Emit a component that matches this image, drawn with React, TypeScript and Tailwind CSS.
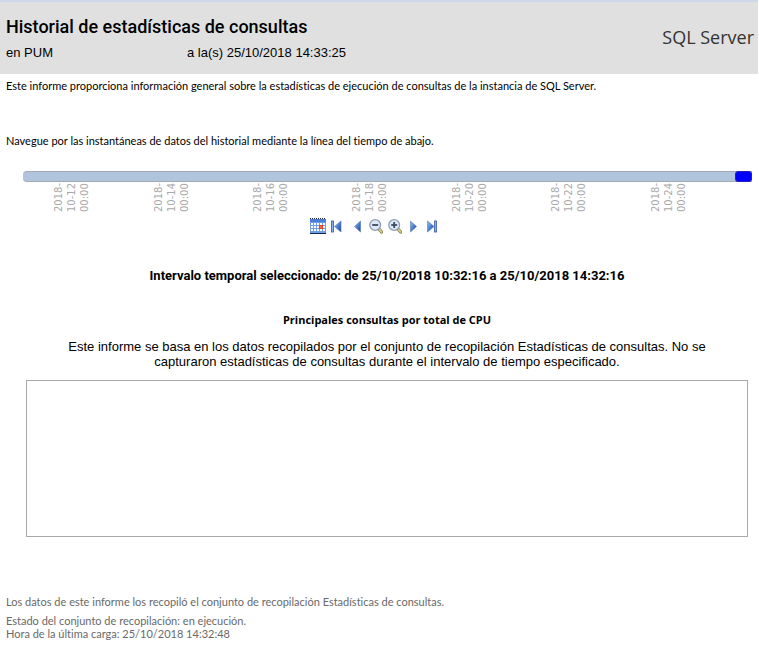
import type { ReactNode } from "react";

const days = ["12", "14", "16", "18", "20", "22", "24"];

function ToolButton({ label, children }: { label: string; children: ReactNode }) {
  return (
    <button type="button" aria-label={label} title={label} className="block h-4 w-4 cursor-pointer">
      <svg viewBox="0 0 16 16" className="block h-4 w-4">
        {children}
      </svg>
    </button>
  );
}

function Magnifier({ plus }: { plus?: boolean }) {
  return (
    <g transform="translate(2 0)">
      <path d="M10 11L12.6 14" stroke="#8a8450" strokeWidth="3.4" strokeLinecap="round" />
      <path d="M10.3 11.3L12.6 14" stroke="#ddd58c" strokeWidth="1.6" strokeLinecap="round" />
      <circle cx="6.2" cy="7" r="5.4" fill="#dce9fa" stroke="#8d9cb0" strokeWidth="1.3" />
      <path d="M3.2 7H9.2" stroke="#3a4a63" strokeWidth="1.8" />
      {plus && <path d="M6.2 4V10" stroke="#3a4a63" strokeWidth="1.8" />}
    </g>
  );
}

function Toolbar() {
  return (
    <div className="mt-[6px] flex justify-center gap-[3px] pr-[10px]">
      <svg width="0" height="0" className="absolute">
        <defs>
          <linearGradient id="blue" x1="0" y1="0" x2="1" y2="1">
            <stop offset="0" stopColor="#a6c6f5" />
            <stop offset="0.5" stopColor="#4a7fd4" />
            <stop offset="1" stopColor="#1b3f94" />
          </linearGradient>
        </defs>
      </svg>
      <ToolButton label="Calendario">
        <rect x="0" y="2" width="16" height="14" fill="#6f9fe8" />
        <path d="M0 0.5H16" stroke="#222" strokeDasharray="1 1" />
        <rect x="0" y="1" width="16" height="3" fill="#4a7ed6" />
        <g fill="#fff">
          {[5, 8, 11].map((y) =>
            [1, 4, 7, 10, 13].map((x) => (
              <rect key={`${x}-${y}`} x={x} y={y} width="2" height="2" />
            )),
          )}
        </g>
        <rect x="0" y="15" width="16" height="1" fill="#14264d" />
        <rect x="9.75" y="7.75" width="2.5" height="2.5" fill="#fff" stroke="#e5401c" strokeWidth="1.5" />
      </ToolButton>
      <ToolButton label="Inicio">
        <rect x="2.5" y="3" width="2" height="11" fill="#8fb0e6" stroke="#35579c" strokeWidth="0.8" />
        <path d="M12 3V14L5.5 8.5Z" fill="url(#blue)" stroke="#5876ad" strokeWidth="0.6" />
      </ToolButton>
      <ToolButton label="Anterior">
        <path d="M12.5 3V14L6.5 8.5Z" fill="url(#blue)" stroke="#5876ad" strokeWidth="0.6" />
      </ToolButton>
      <ToolButton label="Alejar">
        <Magnifier />
      </ToolButton>
      <ToolButton label="Acercar">
        <Magnifier plus />
      </ToolButton>
      <ToolButton label="Siguiente">
        <path d="M5.5 3V14L11.5 8.5Z" fill="url(#blue)" stroke="#5876ad" strokeWidth="0.6" />
      </ToolButton>
      <ToolButton label="Final">
        <path d="M3.5 3V14L10 8.5Z" fill="url(#blue)" stroke="#5876ad" strokeWidth="0.6" />
        <rect x="10.5" y="3" width="2" height="11" fill="#8fb0e6" stroke="#35579c" strokeWidth="0.8" />
      </ToolButton>
    </div>
  );
}

export default function App() {
  return (
    <main className="min-h-screen bg-white font-[Lato,Arial,sans-serif] text-[11px] leading-[13px] text-black [font-variant-ligatures:none]">
      <header className="mr-px flex justify-between border-t-2 border-[#ccd8e8] bg-[#e0e0e0] pt-[13px] pr-1 pb-[11px] pl-[6px]">
        <div>
          <h1 className="font-[Roboto,Arial,sans-serif] text-[18px] leading-6 font-medium">
            Historial de estadísticas de consultas
          </h1>
          <div className="mt-1 flex font-['Liberation_Sans',Arial,sans-serif] text-[13px] leading-5">
            <span className="w-[181px]">en PUM</span>
            <span>a la(s) 25/10/2018 14:33:25</span>
          </div>
        </div>
        <div className="pt-[10px] font-['Open_Sans',sans-serif] text-[18px] leading-6 text-[#333]">SQL Server</div>
      </header>

      <p className="mt-[5px] px-[6px]">
        Este informe proporciona información general sobre la estadísticas de ejecución de consultas de la instancia de SQL Server.
      </p>
      <p className="mt-[42px] px-[6px]">
        Navegue por las instantáneas de datos del historial mediante la línea del tiempo de abajo.
      </p>

      <section aria-label="Línea del tiempo" className="mt-6">
        <div className="mr-[7px] ml-[23px] flex h-[11px] justify-end rounded-l-sm border-y border-[#a5a9b0] bg-[#b0c4de]">
          <button type="button" aria-label="Intervalo seleccionado" className="-my-px block w-[17px] rounded-[3px] border border-[#2020c0] bg-[#0000ff]" />
        </div>
        <div className="mr-[41px] ml-[22px] grid grid-cols-7 pt-[2px] font-['DejaVu_Sans',sans-serif] text-[10px] text-[#a9a9a9]">
          {days.map((day) => (
            <time key={day} dateTime={`2018-10-${day}`} className="h-[28px] w-[39px] rotate-180 justify-self-center leading-[13px] whitespace-nowrap [writing-mode:vertical-rl]">
              2018-
              <br />
              10-{day}
              <br />
              00:00
            </time>
          ))}
        </div>
        <Toolbar />
      </section>

      <section className="mt-[35px] mr-[11px] ml-[26px] text-center">
        <p className="font-[Roboto,Arial,sans-serif] text-[13px] leading-[14px] font-bold">
          Intervalo temporal seleccionado: de 25/10/2018 10:32:16 a 25/10/2018 14:32:16
        </p>
        <h2 className="mt-[29px] font-['Open_Sans',sans-serif] text-[11px] leading-[15px] font-bold">
          Principales consultas por total de CPU
        </h2>
        <p className="mx-8 mt-3 font-['Liberation_Sans',Arial,sans-serif] text-[13px] leading-[15px]">
          Este informe se basa en los datos recopilados por el conjunto de recopilación Estadísticas de consultas. No se capturaron estadísticas de consultas durante el intervalo de tiempo especificado.
        </p>
        <div className="mt-[11px] h-[157px] border border-[#a9a9a9]" />
      </section>

      <footer className="mt-[58px] px-[6px] text-[#696969]">
        <p>Los datos de este informe los recopiló el conjunto de recopilación Estadísticas de consultas.</p>
        <p className="mt-[6px]">Estado del conjunto de recopilación: en ejecución.</p>
        <p>Hora de la última carga: 25/10/2018 14:32:48</p>
      </footer>
    </main>
  );
}
